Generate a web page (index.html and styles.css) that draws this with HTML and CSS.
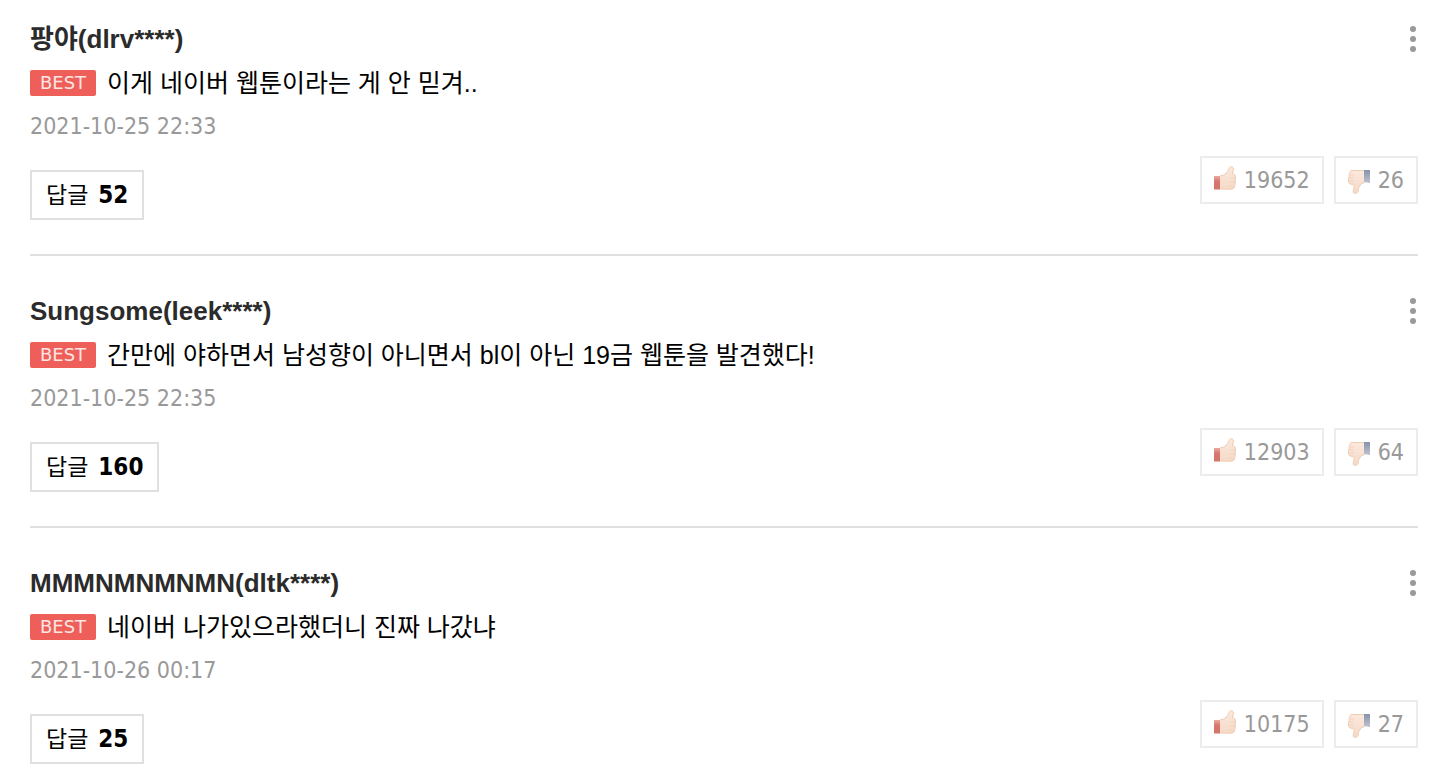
FILE: index.html
```html
<!DOCTYPE html>
<html lang="ko">

<head>
  <meta charset="UTF-8" />
  <title>댓글</title>
  <link rel="stylesheet" href="styles.css">
</head>

<body>

  <!-- thumb icons, shared by every comment -->
  <svg class="icon_defs" width="0" height="0" aria-hidden="true">
    <defs>
      <linearGradient id="skin" x1="0" y1="0" x2="0" y2="1">
        <stop offset="0" stop-color="#fbe9dc" />
        <stop offset="1" stop-color="#f5dac8" />
      </linearGradient>
      <linearGradient id="red_cuff" x1="0" y1="0" x2="0" y2="1">
        <stop offset="0" stop-color="#e9aa9e" />
        <stop offset=".4" stop-color="#d9766b" />
        <stop offset="1" stop-color="#d4756a" />
      </linearGradient>
      <linearGradient id="blue_cuff" x1="0" y1="0" x2="0" y2="1">
        <stop offset="0" stop-color="#8592aa" />
        <stop offset="1" stop-color="#bcc4d1" />
      </linearGradient>
    </defs>
    <symbol id="thumb_up" viewBox="0 0 22 24">
      <path d="M6 10 L10 9 L14 5 L15.500 1.500 Q16.500 .2 18 .5 Q20 1 19.500 4 L18.500 8 Q22 8 22 11 L21.500 18 Q21 23 18 23.500 L6 23.500 Z" fill="url(#skin)" />
      <path d="M6 10 L10 9 L14 5 L15.500 1.500 Q16.500 .5 18 .7 Q19.500 1 19.300 4 L18.500 8 Q21.500 8 21.500 11 L21 18 Q20.500 22.500 18 23 L7 23" fill="none" stroke="#f0cdb4" />
      <path d="M16 12h5M16 16h5M15 20h5" stroke="#f2d3bd" fill="none" />
      <path d="M0 10h6v13.500h-6z" fill="url(#red_cuff)" />
    </symbol>
    <symbol id="thumb_down" viewBox="0 0 22 24">
      <path d="M3 0 L17 0 L17 12 L13 14 L10.500 18 L10 22 Q8 24.500 5.500 23 Q4.500 21.500 6 18 L6 14.500 L2 14 Q0 13 .5 10 L1.500 3 Z" fill="url(#skin)" />
      <path d="M17 .5 L3 .5 L1.500 3 L.5 10 Q0 13 2 14 L6 14.500 L6 18 Q4.500 21.500 5.500 23 Q8 24 10 22 L10.500 18 L13 14 L17 12" fill="none" stroke="#f0cdb4" />
      <path d="M2 5h4M1 8h5M1 11h5" stroke="#f2d3bd" fill="none" />
      <path d="M16 0h6v13l-6-1z" fill="url(#blue_cuff)" />
    </symbol>
  </svg>

  <ul class="comment_list">

    <li class="comment">
      <div class="comment_head">
        <strong class="nick">팡야(dlrv****)</strong>
        <button type="button" class="btn_more" aria-label="메뉴">
          <svg width="10" height="26" viewBox="0 0 10 26" fill="#999"><circle cx="5" cy="3" r="3" /><circle cx="5" cy="13" r="3" /><circle cx="5" cy="23" r="3" /></svg>
        </button>
      </div>
      <p class="comment_text"><span class="ico_best">BEST</span><span>이게 네이버 웹툰이라는 게 안 믿겨..</span></p>
      <div class="date">2021-10-25 22:33</div>
      <div class="comment_tools">
        <button type="button" class="btn_reply">답글 <b>52</b></button>
        <div class="votes">
          <button type="button" class="btn_vote up" aria-label="좋아요 19652"><svg width="22" height="24"><use href="#thumb_up" /></svg><span>19652</span></button>
          <button type="button" class="btn_vote down" aria-label="싫어요 26"><svg width="22" height="24"><use href="#thumb_down" /></svg><span>26</span></button>
        </div>
      </div>
    </li>

    <li class="comment">
      <div class="comment_head">
        <strong class="nick">Sungsome(leek****)</strong>
        <button type="button" class="btn_more" aria-label="메뉴">
          <svg width="10" height="26" viewBox="0 0 10 26" fill="#999"><circle cx="5" cy="3" r="3" /><circle cx="5" cy="13" r="3" /><circle cx="5" cy="23" r="3" /></svg>
        </button>
      </div>
      <p class="comment_text"><span class="ico_best">BEST</span><span>간만에 야하면서 남성향이 아니면서 bl이 아닌 19금 웹툰을 발견했다!</span></p>
      <div class="date">2021-10-25 22:35</div>
      <div class="comment_tools">
        <button type="button" class="btn_reply">답글 <b>160</b></button>
        <div class="votes">
          <button type="button" class="btn_vote up" aria-label="좋아요 12903"><svg width="22" height="24"><use href="#thumb_up" /></svg><span>12903</span></button>
          <button type="button" class="btn_vote down" aria-label="싫어요 64"><svg width="22" height="24"><use href="#thumb_down" /></svg><span>64</span></button>
        </div>
      </div>
    </li>

    <li class="comment">
      <div class="comment_head">
        <strong class="nick">MMMNMNMNMN(dltk****)</strong>
        <button type="button" class="btn_more" aria-label="메뉴">
          <svg width="10" height="26" viewBox="0 0 10 26" fill="#999"><circle cx="5" cy="3" r="3" /><circle cx="5" cy="13" r="3" /><circle cx="5" cy="23" r="3" /></svg>
        </button>
      </div>
      <p class="comment_text"><span class="ico_best">BEST</span><span>네이버 나가있으라했더니 진짜 나갔냐</span></p>
      <div class="date">2021-10-26 00:17</div>
      <div class="comment_tools">
        <button type="button" class="btn_reply">답글 <b>25</b></button>
        <div class="votes">
          <button type="button" class="btn_vote up" aria-label="좋아요 10175"><svg width="22" height="24"><use href="#thumb_up" /></svg><span>10175</span></button>
          <button type="button" class="btn_vote down" aria-label="싫어요 27"><svg width="22" height="24"><use href="#thumb_down" /></svg><span>27</span></button>
        </div>
      </div>
    </li>

  </ul>

</body>

</html>
```

FILE: styles.css
```css
* {
  box-sizing: border-box;
}

body {
  margin: 0;
  background: #fff;
  color: #000;
  font-family: "Liberation Sans", "Noto Sans CJK KR", sans-serif;
}

button {
  margin: 0;
  padding: 0;
  border: 0;
  background: #fff;
  color: inherit;
  cursor: pointer;
}

.icon_defs {
  position: absolute;
}

.comment_list {
  margin: 0;
  padding: 0 18px 0 30px;
  list-style: none;
}

.comment {
  padding: 40px 0 34px;
  border-bottom: 2px solid #e0e0e0;
}

.comment:first-child {
  padding-top: 24px;
}

.comment:last-child {
  padding-bottom: 20px;
  border-bottom: 0;
}

.comment_head {
  display: flex;
  justify-content: space-between;
  align-items: center;
  height: 30px;
}

.nick {
  font-size: 26px;
  line-height: 30px;
  color: #2b2b2b;
}

.btn_more {
  display: flex;
}

.comment_text {
  display: flex;
  align-items: center;
  gap: 11px;
  margin: 12px 0;
  font-size: 25px;
  line-height: 34px;
}

.ico_best {
  flex: none;
  width: 66px;
  height: 26px;
  border-radius: 2px;
  background: #ee5f5a;
  color: #fde6e4;
  font-family: "DejaVu Sans", sans-serif;
  font-size: 18px;
  line-height: 26px;
  text-align: center;
}

.date {
  font-family: "DejaVu Sans Condensed", "Noto Sans", sans-serif;
  font-size: 23px;
  line-height: 28px;
  color: #999;
}

.comment_tools {
  display: flex;
  justify-content: space-between;
  align-items: flex-start;
  margin-top: 16px;
}

.btn_reply {
  display: flex;
  align-items: baseline;
  gap: 10px;
  height: 50px;
  margin-top: 14px;
  padding: 0 14px;
  border: 2px solid #e0e0e0;
  font-family: "Liberation Sans", "Noto Sans CJK KR", sans-serif;
  font-size: 23px;
  line-height: 46px;
}

.btn_reply b {
  font-family: "DejaVu Sans Condensed", "Noto Sans", sans-serif;
  font-size: 24px;
}

.votes {
  display: flex;
  gap: 10px;
}

.btn_vote {
  display: flex;
  align-items: center;
  gap: 8px;
  height: 48px;
  padding: 0 12px;
  border: 2px solid #ececec;
  font-family: "DejaVu Sans Condensed", "Noto Sans", sans-serif;
  font-size: 23px;
  color: #999;
}

.btn_vote.up svg {
  margin-bottom: 4px;
}

.btn_vote.down svg {
  margin-top: 4px;
}
```
